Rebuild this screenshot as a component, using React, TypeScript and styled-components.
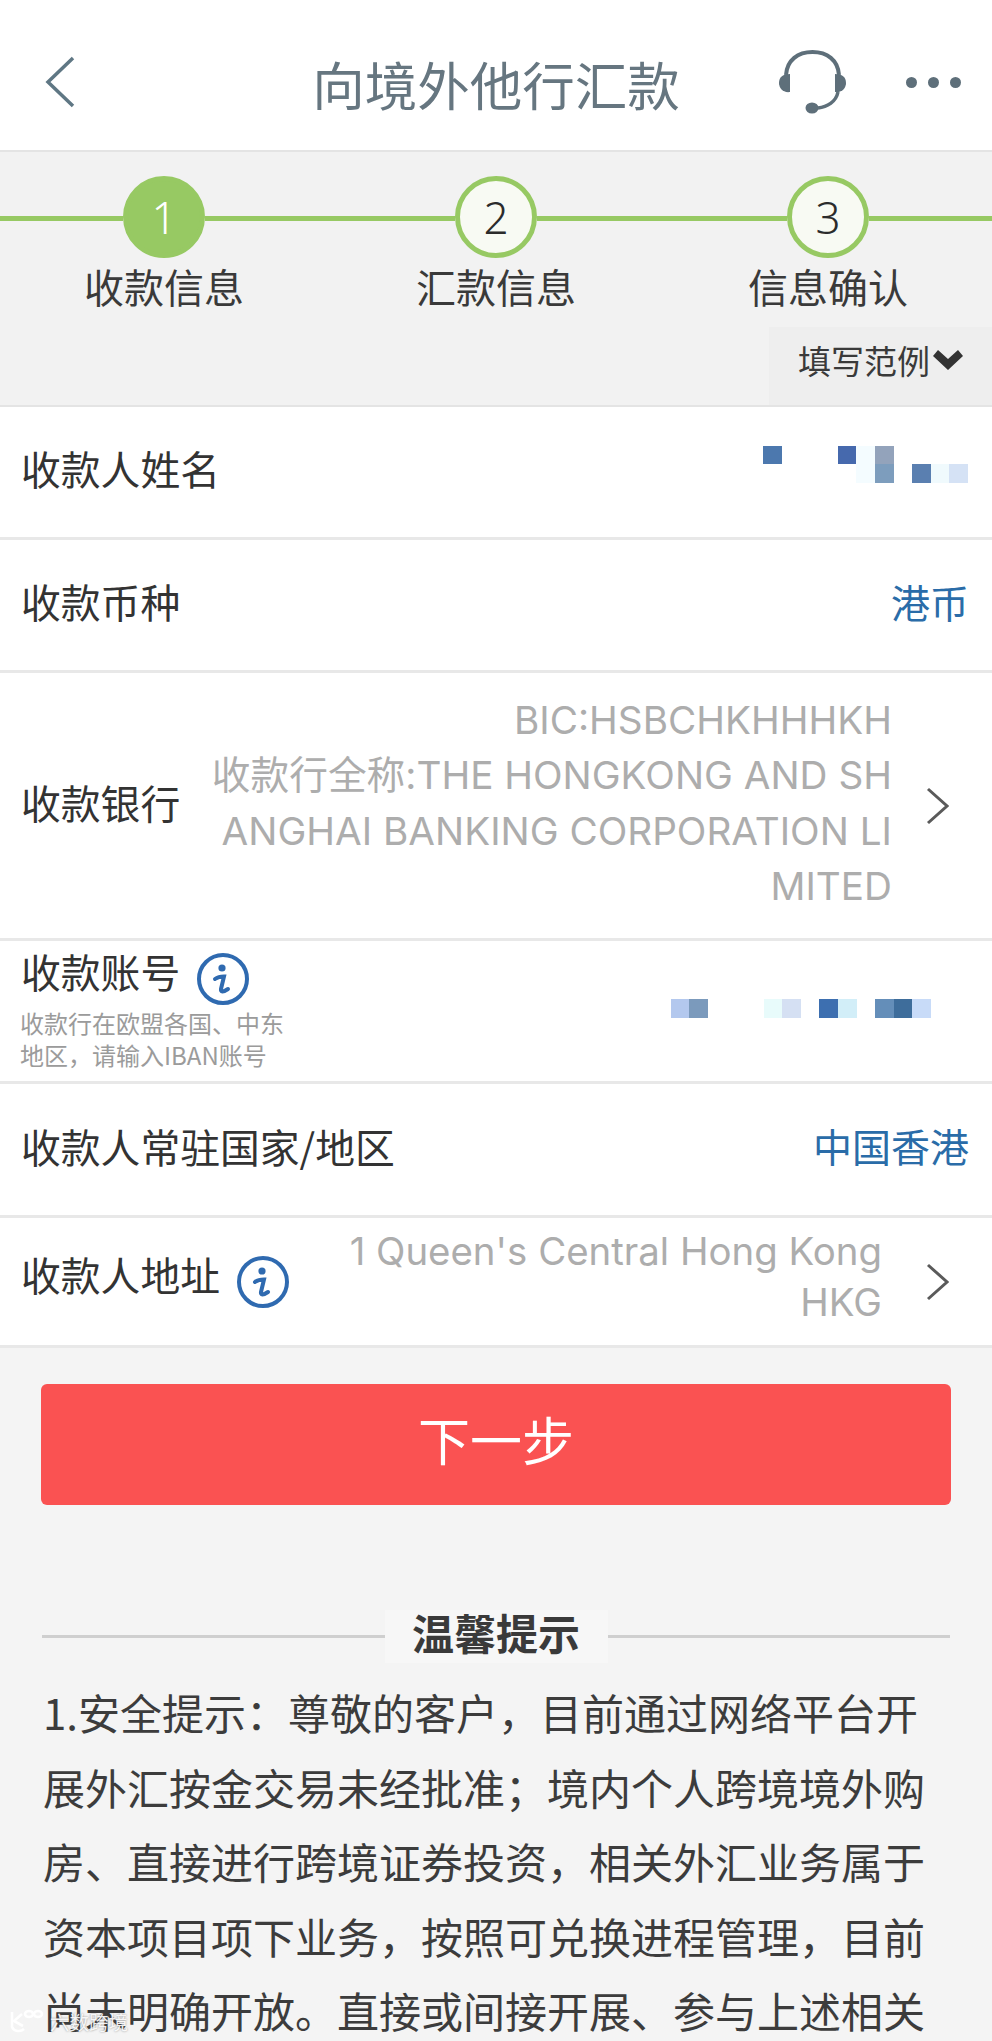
import React from 'react';
import styled, { createGlobalStyle } from 'styled-components';

const GlobalStyle = createGlobalStyle`
  html, body {
    margin: 0;
    width: 992px;
    height: 2041px;
    overflow: hidden;
    background: #f4f4f4;
  }
  * {
    box-sizing: border-box;
  }
`;

const Page = styled.div`
  position: relative;
  width: 992px;
  height: 2041px;
  overflow: hidden;
  background: #f4f4f4;
  color: #333;
  font-family: 'Noto Sans CJK SC', 'Noto Sans', sans-serif;
`;

const Header = styled.header`
  display: grid;
  grid-template-columns: 1fr auto 1fr;
  align-items: center;
  height: 152px;
  padding: 14px 31px 0;
  background: #fff;
  border-bottom: 2px solid #e4e4e4;
`;

const BackHolder = styled.div`
  display: flex;
  padding-left: 14px;
`;

const Title = styled.h1`
  margin: 0;
  padding-top: 2px;
  font-size: 52.5px;
  line-height: 60px;
  font-weight: 400;
  color: #667680;
`;

const HeaderActions = styled.div`
  display: flex;
  align-items: center;
  justify-content: flex-end;
  gap: 60px;
`;

const Dots = styled.div`
  display: flex;
  gap: 11px;
`;

const Dot = styled.span`
  width: 11px;
  height: 11px;
  border-radius: 50%;
  background: #5e6f7a;
`;

const Steps = styled.div`
  display: grid;
  grid-template-columns: 328px 336px 328px;
  height: 175px;
  padding-top: 24px;
  background: #f2f2f2;
`;

const Step = styled.div`
  display: flex;
  flex-direction: column;
  align-items: center;
`;

const StepTrack = styled.div`
  display: flex;
  align-items: center;
  width: 100%;
`;

const TrackLine = styled.span`
  flex: 1;
  height: 5px;
  margin-top: 2px;
  background: #97c963;
`;

const StepCircle = styled.div<{ $active?: boolean }>`
  display: flex;
  align-items: center;
  justify-content: center;
  width: 82px;
  height: 82px;
  border-radius: 50%;
  border: 5px solid #97c963;
  background: ${({ $active }) => ($active ? '#97c963' : '#f8faf3')};
  color: ${({ $active }) => ($active ? '#fff' : '#2b2b2b')};
  font-family: 'Noto Sans', sans-serif;
  font-size: 44px;
  font-weight: 300;
  line-height: 1;
`;

const StepLabel = styled.div`
  margin-top: 3px;
  font-size: 40px;
  line-height: 50px;
  color: #3a3a3a;
`;

const ExampleBar = styled.div`
  display: flex;
  justify-content: flex-end;
  height: 80px;
  background: #f2f2f2;
  border-bottom: 2px solid #e4e4e4;
`;

const ExampleToggle = styled.div`
  display: flex;
  align-items: center;
  gap: 3px;
  width: 223px;
  padding: 0 0 12px 29px;
  background: #eeeeee;
  font-size: 33px;
  line-height: 40px;
  color: #3a3a3a;
`;

const Row = styled.div<{ $height: number }>`
  display: flex;
  align-items: center;
  justify-content: space-between;
  height: ${({ $height }) => $height}px;
  padding: 0 23px 0 21px;
  background: #fff;
  border-bottom: 3px solid #e8e8e8;
`;

const RowLabel = styled.div`
  flex: none;
  display: flex;
  align-items: center;
  font-size: 39.8px;
  color: #333;
  white-space: nowrap;
`;

const LabelText = styled.span<{ $lift?: number }>`
  display: block;
  line-height: 42px;
  padding-bottom: ${({ $lift = 8 }) => $lift}px;
`;

const LinkValue = styled.div`
  font-size: 39px;
  line-height: 42px;
  padding-bottom: 9px;
  color: #2a6ca8;
`;

const MutedGroup = styled.div`
  display: flex;
  align-items: center;
  margin-right: 20px;
`;

const MutedValue = styled.div<{ $lineHeight: number; $size: number; $lift?: number }>`
  padding-bottom: ${({ $lift = 0 }) => $lift}px;
  text-align: right;
  font-family: Inter, 'Noto Sans CJK SC', sans-serif;
  font-size: ${({ $size }) => $size}px;
  line-height: ${({ $lineHeight }) => $lineHeight}px;
  color: #adadad;
  white-space: nowrap;
`;

const MutedLine = styled.div``;

const ChevronHolder = styled.div<{ $gap: number }>`
  display: flex;
  margin-left: ${({ $gap }) => $gap}px;
`;

const InfoHolder = styled.span<{ $gap: number }>`
  display: flex;
  margin-left: ${({ $gap }) => $gap}px;
`;

const AccountBlock = styled.div`
  align-self: flex-start;
  padding-top: 9px;
`;

const AccountHint = styled.div`
  width: 270px;
  margin: -1px 0 0 -1px;
  font-size: 24px;
  line-height: 32px;
  color: #9b9b9b;
`;

const Mosaic = styled.div<{ $shift: number }>`
  display: grid;
  grid-template-columns: repeat(11, 18.6px);
  grid-auto-rows: 18.5px;
  margin-top: ${({ $shift }) => $shift}px;
  margin-right: 1px;
`;

const AccountMosaic = styled(Mosaic)`
  grid-template-columns: repeat(14, 18.6px);
  margin-right: 38px;
`;

const Cell = styled.span<{ $col: number; $row: number; $color: string }>`
  grid-column: ${({ $col }) => $col};
  grid-row: ${({ $row }) => $row};
  background: ${({ $color }) => $color};
`;

const NextButton = styled.button`
  display: block;
  width: 910px;
  height: 121px;
  margin: 36px 0 0 41px;
  padding: 0 0 12px;
  border: 0;
  border-radius: 6px;
  background: #fa5252;
  color: #fff;
  font-family: inherit;
  font-size: 52px;
  line-height: 60px;
`;

const TipsHead = styled.div`
  display: flex;
  align-items: center;
  margin: 105px 42px 0;
`;

const TipsRule = styled.span`
  flex: 1;
  height: 3px;
  background: #cfcfcf;
`;

const TipsTitle = styled.h2`
  width: 223px;
  margin: 0;
  padding-bottom: 9px;
  background: #f7f7f7;
  text-align: center;
  font-size: 42px;
  line-height: 44px;
  font-weight: 700;
  color: #3a3a3a;
`;

const TipsBody = styled.p`
  width: 886px;
  margin: 12px 0 0 43px;
  font-size: 42px;
  line-height: 74.5px;
  color: #3c3c3c;
`;

const Watermark = styled.div`
  position: absolute;
  left: 9px;
  bottom: 8px;
  display: flex;
  align-items: flex-end;
  gap: 6px;
  color: rgba(255, 255, 255, 0.92);
  font-size: 19.5px;
  line-height: 22px;
  text-shadow: 0 0 2px rgba(90, 90, 90, 0.7);
`;

const BackIcon = () => (
  <svg width="30" height="52" viewBox="0 0 30 52" fill="none" stroke="#5f7784" strokeWidth="3.5">
    <path d="M28 2 L3 26 L28 50" />
  </svg>
);

const HeadsetIcon = () => (
  <svg width="67" height="64" viewBox="0 0 67 64" fill="none">
    <path d="M7 25 C8 10 19 2 33.5 2 C48 2 59 10 60 25" stroke="#5e6f7a" strokeWidth="4" />
    <path d="M11 24 L11 42 C4 43 0 38 0 33 C0 27 4 24 11 24 Z" fill="#5e6f7a" />
    <path d="M56 24 L56 42 C63 43 67 38 67 33 C67 27 63 24 56 24 Z" fill="#5e6f7a" />
    <path d="M59 42 C57 52 48 57 39 58" stroke="#5e6f7a" strokeWidth="3.5" />
    <ellipse cx="33" cy="58" rx="6.5" ry="5.5" fill="#5e6f7a" />
  </svg>
);

const ChevronIcon = () => (
  <svg width="23" height="38" viewBox="0 0 23 38" fill="none" stroke="#5a5a5a" strokeWidth="3">
    <path d="M2 2 L21 19 L2 36" />
  </svg>
);

const ExampleArrow = () => (
  <svg width="30" height="20" viewBox="0 0 30 20" fill="#333">
    <path d="M0 6 L5 0 L15 9 L25 0 L30 6 L15 20 Z" />
  </svg>
);

const InfoIcon = () => (
  <svg width="52" height="52" viewBox="0 0 52 52" fill="none">
    <circle cx="26" cy="26" r="24" stroke="#2f6ab0" strokeWidth="4" />
    <circle cx="25" cy="15" r="3.6" fill="#2f6ab0" />
    <path
      d="M18 26 C20 24.5 23 23.5 27 23.5 L24 36 C23.5 39 26 39.5 31 36"
      stroke="#2f6ab0"
      strokeWidth="4"
      strokeLinecap="round"
    />
  </svg>
);

const WatermarkLogo = () => (
  <svg width="35" height="24" viewBox="0 0 35 24" fill="none" stroke="rgba(255,255,255,0.95)" strokeWidth="2.6">
    <path d="M3 3 L3 18 C5 23 12 23 15 20" />
    <path d="M13 5 L5 12 L14 17" />
    <ellipse cx="20" cy="5" rx="4" ry="3" />
    <ellipse cx="29" cy="5" rx="4" ry="3" />
  </svg>
);

type MosaicCell = [number, number, string];

const nameCells: MosaicCell[] = [
  [1, 1, '#4c78ae'],
  [5, 1, '#4669ad'],
  [6, 1, '#f4fcff'],
  [7, 1, '#93a3bb'],
  [6, 2, '#f4fcff'],
  [7, 2, '#7d9dbd'],
  [9, 2, '#5a7fb0'],
  [10, 2, '#f0fafd'],
  [11, 2, '#d5e2f5'],
];

const accountCells: MosaicCell[] = [
  [1, 1, '#b3c8ee'],
  [2, 1, '#7b9abc'],
  [6, 1, '#e8fbfb'],
  [7, 1, '#d5e0f3'],
  [9, 1, '#3d6fb0'],
  [10, 1, '#d2eef8'],
  [12, 1, '#648eb9'],
  [13, 1, '#3e6d9b'],
  [14, 1, '#c8dbf8'],
];

const steps = [
  { number: '1', label: '收款信息', active: true },
  { number: '2', label: '汇款信息', active: false },
  { number: '3', label: '信息确认', active: false },
];

const bankLines = [
  'BIC:HSBCHKHHHKH',
  '收款行全称:THE HONGKONG AND SH',
  'ANGHAI BANKING CORPORATION LI',
  'MITED',
];

const addressLines = ["1 Queen's Central Hong Kong", 'HKG'];

export default function App() {
  return (
    <Page>
      <GlobalStyle />
      <Header>
        <BackHolder>
          <BackIcon />
        </BackHolder>
        <Title>向境外他行汇款</Title>
        <HeaderActions>
          <HeadsetIcon />
          <Dots>
            <Dot />
            <Dot />
            <Dot />
          </Dots>
        </HeaderActions>
      </Header>

      <Steps>
        {steps.map((step) => (
          <Step key={step.number}>
            <StepTrack>
              <TrackLine />
              <StepCircle $active={step.active}>{step.number}</StepCircle>
              <TrackLine />
            </StepTrack>
            <StepLabel>{step.label}</StepLabel>
          </Step>
        ))}
      </Steps>

      <ExampleBar>
        <ExampleToggle>
          填写范例
          <ExampleArrow />
        </ExampleToggle>
      </ExampleBar>

      <Row $height={133}>
        <RowLabel>
          <LabelText>收款人姓名</LabelText>
        </RowLabel>
        <Mosaic $shift={-16}>
          {nameCells.map(([col, row, color]) => (
            <Cell key={`${col}-${row}`} $col={col} $row={row} $color={color} />
          ))}
        </Mosaic>
      </Row>

      <Row $height={133}>
        <RowLabel>
          <LabelText>收款币种</LabelText>
        </RowLabel>
        <LinkValue>港币</LinkValue>
      </Row>

      <Row $height={268}>
        <RowLabel>
          <LabelText>收款银行</LabelText>
        </RowLabel>
        <MutedGroup>
          <MutedValue $size={38.7} $lineHeight={55.4} $lift={4}>
            {bankLines.map((line) => (
              <MutedLine key={line}>{line}</MutedLine>
            ))}
          </MutedValue>
          <ChevronHolder $gap={34}>
            <ChevronIcon />
          </ChevronHolder>
        </MutedGroup>
      </Row>

      <Row $height={143}>
        <AccountBlock>
          <RowLabel>
            <LabelText $lift={16}>收款账号</LabelText>
            <InfoHolder $gap={17}>
              <InfoIcon />
            </InfoHolder>
          </RowLabel>
          <AccountHint>收款行在欧盟各国、中东地区，请输入IBAN账号</AccountHint>
        </AccountBlock>
        <AccountMosaic $shift={-5}>
          {accountCells.map(([col, row, color]) => (
            <Cell key={`${col}-${row}`} $col={col} $row={row} $color={color} />
          ))}
        </AccountMosaic>
      </Row>

      <Row $height={134}>
        <RowLabel>
          <LabelText>收款人常驻国家/地区</LabelText>
        </RowLabel>
        <LinkValue>中国香港</LinkValue>
      </Row>

      <Row $height={130}>
        <RowLabel>
          <LabelText $lift={16}>收款人地址</LabelText>
          <InfoHolder $gap={17}>
            <InfoIcon />
          </InfoHolder>
        </RowLabel>
        <MutedGroup>
          <MutedValue $size={38.4} $lineHeight={51} $lift={9}>
            {addressLines.map((line) => (
              <MutedLine key={line}>{line}</MutedLine>
            ))}
          </MutedValue>
          <ChevronHolder $gap={44}>
            <ChevronIcon />
          </ChevronHolder>
        </MutedGroup>
      </Row>

      <NextButton>下一步</NextButton>

      <TipsHead>
        <TipsRule />
        <TipsTitle>温馨提示</TipsTitle>
        <TipsRule />
      </TipsHead>
      <TipsBody>
        1.安全提示：尊敬的客户，目前通过网络平台开展外汇按金交易未经批准；境内个人跨境境外购房、直接进行跨境证券投资，相关外汇业务属于资本项目项下业务，按照可兑换进程管理，目前尚未明确开放。直接或间接开展、参与上述相关
      </TipsBody>

      <Watermark>
        <WatermarkLogo />
        六数跨境
      </Watermark>
    </Page>
  );
}
